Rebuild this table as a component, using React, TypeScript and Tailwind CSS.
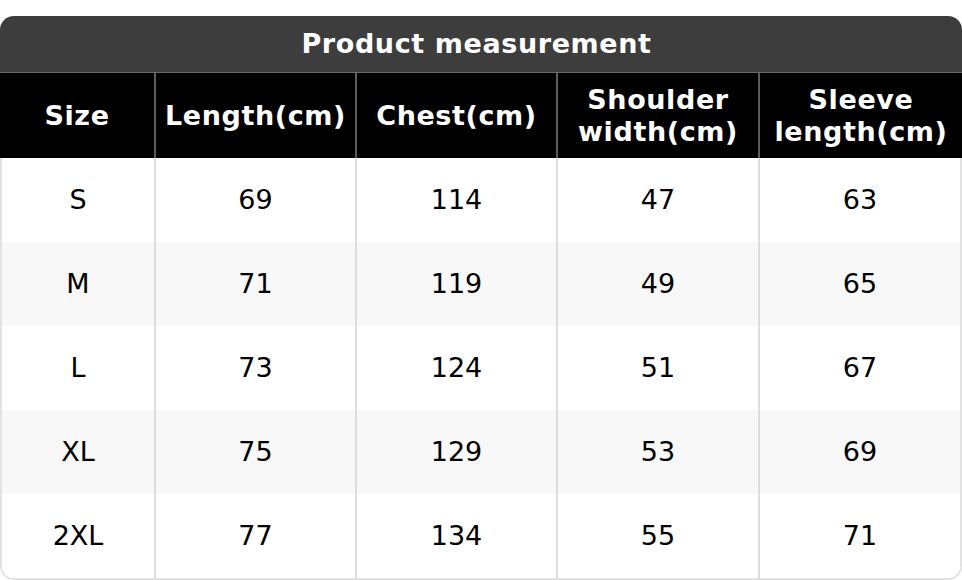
const HEADERS = ['Size', 'Length(cm)', 'Chest(cm)', 'Shoulder width(cm)', 'Sleeve length(cm)']

const ROWS = [
  ['S', '69', '114', '47', '63'],
  ['M', '71', '119', '49', '65'],
  ['L', '73', '124', '51', '67'],
  ['XL', '75', '129', '53', '69'],
  ['2XL', '77', '134', '55', '71'],
]

const HEAD_LABELS: Record<string, string[]> = {
  'Shoulder width(cm)': ['Shoulder', 'width(cm)'],
  'Sleeve length(cm)': ['Sleeve', 'length(cm)'],
}

export default function App() {
  return (
    <div className="w-[962px] h-[580px] bg-white pt-4 font-['DejaVu_Sans',sans-serif]">
      <div className="w-[962px] rounded-t-[14px] overflow-hidden">
        <div className="h-[57px] pb-[2px] pr-[9px] bg-[#3d3d3d] border-b border-[#6a6a6a] flex items-center justify-center text-white font-bold text-[27px] tracking-[0.6px] leading-none">
          Product measurement
        </div>
        <div className="grid grid-cols-[154px_201px_201px_202px_1fr] h-[85px] bg-black">
          {HEADERS.map((h, i) => (
            <div
              key={h}
              className={`flex flex-col items-center justify-center text-white font-bold text-[27px] tracking-[0.6px] leading-[32px] ${
                i > 0 ? 'border-l-2 border-[#5c5c5c]' : ''
              }`}
            >
              {(HEAD_LABELS[h] || [h]).map((line) => (
                <span key={line}>{line}</span>
              ))}
            </div>
          ))}
        </div>
      </div>
      <div className="w-[962px] border-x-2 border-b-2 border-[#e2e2e2] rounded-b-[14px] overflow-hidden">
        {ROWS.map((row, r) => (
          <div
            key={row[0]}
            className={`grid grid-cols-[152px_201px_201px_202px_1fr] h-[84px] ${r % 2 === 1 ? 'bg-[#f8f8f8]' : 'bg-white'}`}
          >
            {row.map((cell, i) => (
              <div
                key={i}
                className={`flex items-center justify-center text-[27px] text-black ${
                  i > 0 ? 'border-l-2 border-[#dcdcdc]' : ''
                }`}
              >
                {cell}
              </div>
            ))}
          </div>
        ))}
      </div>
    </div>
  )
}
